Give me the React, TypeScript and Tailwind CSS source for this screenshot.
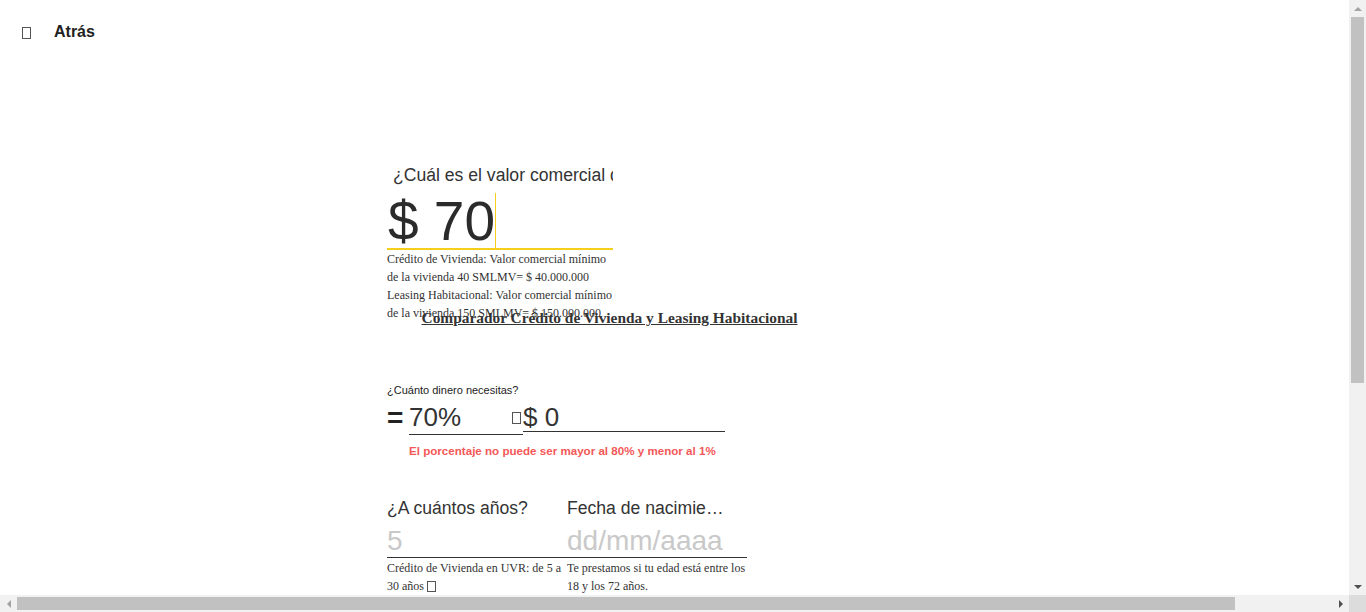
import { useState } from "react";

const Tofu = ({ className = "" }: { className?: string }) => (
    <span className={"inline-block border border-[#555] " + className} />
);

// flechas de las barras de desplazamiento
const Arrow = ({ dir, color }: { dir: "up" | "down" | "left" | "right"; color: string }) => {
    const pts = {
        up: "0,4 4,0 8,4",
        down: "0,0 8,0 4,4",
        left: "4,0 4,8 0,4",
        right: "0,0 4,4 0,8",
    }[dir];
    const vertical = dir === "up" || dir === "down";
    return (
        <svg width={vertical ? 8 : 4} height={vertical ? 4 : 8} viewBox={vertical ? "0 0 8 4" : "0 0 4 8"}>
            <polygon points={pts} fill={color} />
        </svg>
    );
};

const App = () => {
    const [valor, setValor] = useState("$ 70");
    const [porcentaje, setPorcentaje] = useState("70%");
    const [monto, setMonto] = useState("$ 0");
    const [anios, setAnios] = useState("");
    const [fecha, setFecha] = useState("");

    return (
        <div className="w-screen h-screen overflow-hidden flex flex-col bg-white">
            <div className="flex flex-1 min-h-0">
                <div className="flex-1 min-w-0 overflow-hidden">
                    <div className="w-[1457px] h-[1070px] bg-white text-[#333] font-['Liberation_Sans',Arial,sans-serif]">
                        <header className="flex items-center h-[44px] mt-[10px] pl-[22px]">
                            <Tofu className="w-[9px] h-[12px] mt-[2px]" />
                            <span className="ml-[23px] text-[16px] font-bold text-[#222]">Atrás</span>
                        </header>

                        <main className="pl-[387px] pt-[111px]">
                            <div className="w-[226px] h-[144px]">
                                <label className="block pl-[6px] text-[17.6px] leading-[21px] whitespace-nowrap overflow-hidden">
                                    ¿Cuál es el valor comercial de la vivienda?
                                </label>
                                <div className="mt-[7px] flex items-stretch h-[57px] border-b-2 border-[#f5cf1b]">
                                    <input
                                        className="w-[108px] pl-[1px] text-[55px] leading-[56px] h-[56px] text-[#2b2b2b] outline-none bg-transparent"
                                        value={valor}
                                        onChange={(e) => setValor(e.target.value)}
                                    />
                                    <span className="w-px bg-[#f5cf1b]" />
                                </div>
                                <p className="font-['Liberation_Serif','Times_New_Roman',serif] text-[12px] leading-[18px] text-[#333]">
                                    Crédito de Vivienda: Valor comercial mínimo de la vivienda 40 SMLMV= $ 40.000.000 Leasing Habitacional: Valor comercial mínimo de la vivienda 150 SMLMV= $ 150.000.000
                                </p>
                            </div>

                            <h1 className="w-[445px] text-center font-['Liberation_Serif','Times_New_Roman',serif] font-bold text-[15.4px] leading-[18px] underline text-[#333]">
                                Comparador Crédito de Vivienda y Leasing Habitacional
                            </h1>

                            <div className="mt-[57px]">
                                <label className="block text-[11px] leading-[13px] text-[#222]">¿Cuánto dinero necesitas?</label>
                                <div className="mt-[7px] flex items-start">
                                    <span className="w-[22px] text-[28px] font-bold leading-[28px] text-[#222]">=</span>
                                    <div className="relative w-[114px] h-[31px] border-b border-[#333]">
                                        <input
                                            className="w-full h-[26px] text-[26px] leading-[26px] outline-none bg-transparent"
                                            value={porcentaje}
                                            onChange={(e) => setPorcentaje(e.target.value)}
                                        />
                                        <Tofu className="absolute right-[2px] top-[8px] w-[9px] h-[12px] border-[#444]" />
                                    </div>
                                    <div className="w-[202px] h-[28px] border-b border-[#333]">
                                        <input
                                            className="w-full h-[27px] text-[26px] leading-[27px] outline-none bg-transparent"
                                            value={monto}
                                            onChange={(e) => setMonto(e.target.value)}
                                        />
                                    </div>
                                </div>
                                <p className="mt-[9px] ml-[22px] text-[11.6px] leading-[14px] font-bold text-[#f35858]">
                                    El porcentaje no puede ser mayor al 80% y menor al 1%
                                </p>
                            </div>

                            <div className="mt-[40px] w-[360px]">
                                <div className="grid grid-cols-2 border-b border-[#333]">
                                    <div>
                                        <label className="block text-[17.6px] leading-[21px]">¿A cuántos años?</label>
                                        <input
                                            className="mt-[7px] w-full h-[29px] text-[28px] leading-[29px] outline-none bg-transparent placeholder:text-[#c9c9c9]"
                                            placeholder="5"
                                            value={anios}
                                            onChange={(e) => setAnios(e.target.value)}
                                        />
                                    </div>
                                    <div>
                                        <label className="block w-[162px] text-[17.6px] leading-[21px] truncate">Fecha de nacimiento</label>
                                        <input
                                            className="mt-[7px] w-full h-[29px] text-[28px] leading-[29px] outline-none bg-transparent placeholder:text-[#c9c9c9]"
                                            placeholder="dd/mm/aaaa"
                                            value={fecha}
                                            onChange={(e) => setFecha(e.target.value)}
                                        />
                                    </div>
                                </div>
                                <div className="grid grid-cols-2 font-['Liberation_Serif','Times_New_Roman',serif] text-[12px] leading-[18px] pt-[1px]">
                                    <p className="pr-[4px]">
                                        Crédito de Vivienda en UVR: de 5 a 30 años <Tofu className="w-[9px] h-[11px] align-[-2px]" />
                                    </p>
                                    <p>Te prestamos si tu edad está entre los 18 y los 72 años.</p>
                                </div>
                            </div>
                        </main>
                    </div>
                </div>

                {/* barra vertical */}
                <div className="w-[17px] shrink-0 bg-[#f1f1f1] flex flex-col">
                    <div className="h-[17px] flex items-center justify-center">
                        <Arrow dir="up" color="#a3a3a3" />
                    </div>
                    <div className="h-[366px] mx-[2px] bg-[#c1c1c1]" />
                    <div className="flex-1" />
                    <div className="h-[17px] flex items-center justify-center">
                        <Arrow dir="down" color="#505050" />
                    </div>
                </div>
            </div>

            {/* barra horizontal */}
            <div className="h-[17px] shrink-0 flex">
                <div className="flex-1 bg-[#f1f1f1] flex">
                    <div className="w-[17px] flex items-center justify-center">
                        <Arrow dir="left" color="#a3a3a3" />
                    </div>
                    <div className="w-[1218px] my-[2px] bg-[#c1c1c1]" />
                    <div className="flex-1" />
                    <div className="w-[17px] flex items-center justify-center">
                        <Arrow dir="right" color="#505050" />
                    </div>
                </div>
                <div className="w-[17px] bg-[#dcdcdc]" />
            </div>
        </div>
    );
};

export default App;
